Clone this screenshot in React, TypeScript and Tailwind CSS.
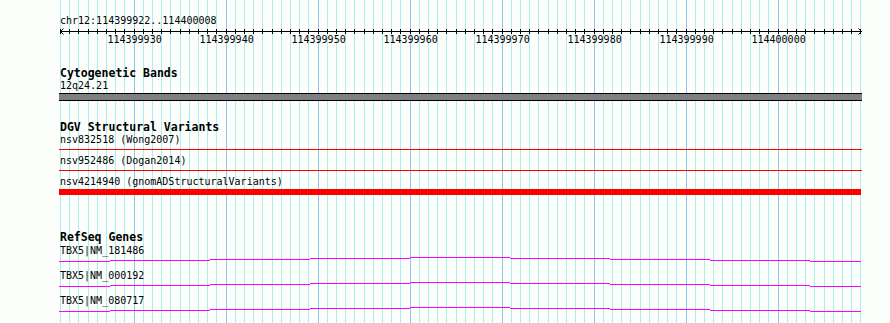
import React from "react";

const XS = Array.from({ length: 88 }, (_, k) => ({
  x: Math.floor(60.5 + 9.2 * k),
  major: k % 10 === 8,
}));

const LABELS = [
  "114399930",
  "114399940",
  "114399950",
  "114399960",
  "114399970",
  "114399980",
  "114399990",
  "114400000",
];

const SEGMENTS: [number, number, number][] = [
  [0, 51, 0],
  [51, 151, 1],
  [151, 251, 2],
  [251, 351, 3],
  [351, 451, 4],
  [451, 551, 3],
  [551, 651, 2],
  [651, 751, 1],
  [751, 802, 0],
];

function GeneLine() {
  return (
    <svg width={803} height={5} className="block" shapeRendering="crispEdges">
      {SEGMENTS.map(([a, b, l], i) => (
        <rect key={i} x={a} y={4 - l} width={b - a} height={1} fill="#ff00ff" />
      ))}
    </svg>
  );
}

function GeneRow({ name, first }: { name: string; first?: boolean }) {
  return (
    <div className={first ? "mt-px" : "mt-[8px]"}>
      <div className="h-[12px] pl-px text-[10px] leading-[12px]">{name}</div>
      <GeneLine />
    </div>
  );
}

export default function App() {
  return (
    <div className="relative h-[323px] w-[890px] overflow-hidden bg-[#fcfefc] font-['DejaVu_Sans_Mono',monospace] text-black">
      <svg
        className="absolute left-0 top-0"
        width={890}
        height={323}
        shapeRendering="crispEdges"
      >
        {XS.map(({ x, major }, i) => (
          <rect
            key={i}
            x={x}
            y={0}
            width={1}
            height={323}
            fill={major ? "#8cc8e6" : "#afeeee"}
          />
        ))}
      </svg>

      <div className="relative flex flex-col items-start pl-[59px] pt-[15px]">
        <div className="h-[12px] pl-px text-[10px] leading-[12px]">
          chr12:114399922..114400008
        </div>

        <svg width={803} height={8} className="block">
          <rect x={1} y={4} width={802} height={1} fill="#000" shapeRendering="crispEdges" />
          {XS.map(({ x }, i) => (
            <rect
              key={i}
              x={x - 59}
              y={2}
              width={1}
              height={5}
              fill="#000"
              shapeRendering="crispEdges"
            />
          ))}
          <polyline points="4.5,1.5 1.5,4.5 4.5,7.5" fill="none" stroke="#000" strokeWidth={1} />
          <polyline points="799.5,1.5 802.5,4.5 799.5,7.5" fill="none" stroke="#000" strokeWidth={1} />
        </svg>

        <div className="relative -mt-px h-[12px] w-[803px] text-[10px] leading-[12px]">
          {LABELS.map((t, i) => {
            const cx = XS[8 + i * 10].x + 0.5 - 59;
            return (
              <span key={t} className="absolute top-0" style={{ left: cx - 27 }}>
                {t}
              </span>
            );
          })}
        </div>

        <div className="mt-[21px] h-[13px] pl-px text-[11.5px] font-bold leading-[13px]">
          Cytogenetic Bands
        </div>
        <div className="h-[12px] pl-px text-[10px] leading-[12px]">12q24.21</div>
        <div className="mt-px h-[8px] w-[803px] border-y border-black bg-[#808080]" />

        <div className="mt-[20px] h-[13px] pl-px text-[11.5px] font-bold leading-[13px]">
          DGV Structural Variants
        </div>
        <div className="h-[12px] pl-px text-[10px] leading-[12px]">nsv832518 (Wong2007)</div>
        <div className="mt-[3px] h-px w-[803px] bg-[#ff0000]" />
        <div className="mt-[5px] h-[12px] pl-px text-[10px] leading-[12px]">nsv952486 (Dogan2014)</div>
        <div className="mt-[3px] h-px w-[803px] bg-[#ff0000]" />
        <div className="mt-[5px] h-[12px] pl-px text-[10px] leading-[12px]">
          nsv4214940 (gnomADStructuralVariants)
        </div>
        <div className="mt-px h-[6px] w-[802px] bg-[#ff0000]" />

        <div className="mt-[36px] h-[13px] pl-px text-[11.5px] font-bold leading-[13px]">
          RefSeq Genes
        </div>
        <GeneRow name="TBX5|NM_181486" first />
        <GeneRow name="TBX5|NM_000192" />
        <GeneRow name="TBX5|NM_080717" />
      </div>
    </div>
  );
}
